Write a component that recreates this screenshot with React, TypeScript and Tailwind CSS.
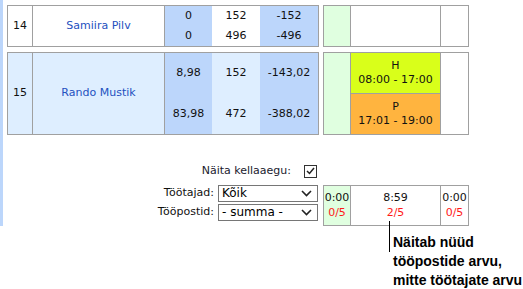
import React from 'react';

const BLUE = 'bg-[#bcd6fb]';
const LIGHT = 'bg-[#deeeff]';
const GREEN = 'bg-[#e0ffe0]';

function Chevron() {
  return (
    <svg width="11" height="7" viewBox="0 0 11 7" className="mr-[5px]">
      <path d="M1 1 L5.5 5.5 L10 1" fill="none" stroke="#222" strokeWidth="1.6" />
    </svg>
  );
}

function Select({ value }: { value: string }) {
  return (
    <div className="flex h-[17px] w-[100px] items-center justify-between border border-[#767676] bg-white pl-[3px] text-[12px] leading-none text-black">
      <span>{value}</span>
      <Chevron />
    </div>
  );
}

function StatCell({ time, count, className }: { time: string; count: string; className: string }) {
  return (
    <div className={`flex flex-col items-center justify-center leading-[15px] ${className}`}>
      <span className="text-[#111]">{time}</span>
      <span className="text-[#ff1a1a]">{count}</span>
    </div>
  );
}

export default function App() {
  return (
    <div className="flex h-[289px] w-[523px] overflow-hidden bg-white text-[11px] text-[#111] [font-family:'DejaVu_Sans',Verdana,sans-serif]">
      {/* left blue strip */}
      <div className="h-[226px] w-[3px] shrink-0 bg-[#bcd6fb]"></div>

      <div className="ml-[4px] flex flex-col pt-[5px]">
        {/* row 14 */}
        <div className="flex gap-[4px]">
          <div className="flex h-[42px] w-[312px] border border-[#a0a0a0]">
            <div className="flex w-[25px] items-center justify-center border-r border-[#a0a0a0]">14</div>
            <div className="flex w-[132px] items-center justify-center border-r border-[#a0a0a0] text-[#2450c0]">Samiira Pilv</div>
            <div className={`flex w-[47px] flex-col items-center justify-center leading-[20px] ${BLUE}`}>
              <span>0</span>
              <span>0</span>
            </div>
            <div className="flex w-[48px] flex-col items-center justify-center leading-[20px]">
              <span>152</span>
              <span>496</span>
            </div>
            <div className={`flex w-[58px] flex-col items-center justify-center leading-[20px] ${BLUE}`}>
              <span>-152</span>
              <span>-496</span>
            </div>
          </div>
          <div className="flex h-[42px] w-[146px] border border-[#a0a0a0]">
            <div className={`w-[27px] border-r border-[#a0a0a0] ${GREEN}`}></div>
            <div className="w-[90px] border-r border-[#a0a0a0]"></div>
            <div className="w-[27px]"></div>
          </div>
        </div>

        {/* row 15 */}
        <div className="mt-[5px] flex gap-[4px]">
          <div className={`flex h-[83px] w-[312px] border border-[#a0a0a0] ${LIGHT}`}>
            <div className="flex w-[25px] items-center justify-center border-r border-[#a0a0a0]">15</div>
            <div className="flex w-[132px] items-center justify-center border-r border-[#a0a0a0] text-[#2450c0]">Rando Mustik</div>
            <div className={`flex w-[47px] flex-col ${BLUE}`}>
              <span className="flex flex-1 items-center justify-center">8,98</span>
              <span className="flex flex-1 items-center justify-center">83,98</span>
            </div>
            <div className="flex w-[48px] flex-col">
              <span className="flex flex-1 items-center justify-center">152</span>
              <span className="flex flex-1 items-center justify-center">472</span>
            </div>
            <div className={`flex w-[58px] flex-col ${BLUE}`}>
              <span className="flex flex-1 items-center justify-center">-143,02</span>
              <span className="flex flex-1 items-center justify-center">-388,02</span>
            </div>
          </div>
          <div className="flex h-[83px] w-[146px] border border-[#a0a0a0]">
            <div className={`w-[27px] border-r border-[#a0a0a0] ${GREEN}`}></div>
            <div className="flex w-[90px] flex-col border-r border-[#a0a0a0]">
              <div className="flex h-[40px] flex-col items-center justify-center bg-[#d9ff1a] leading-[14px]">
                <span>H</span>
                <span>08:00 - 17:00</span>
              </div>
              <div className="flex flex-1 flex-col items-center justify-center border-t border-[#a0a0a0] bg-[#ffb43f] leading-[14px]">
                <span>P</span>
                <span>17:01 - 19:00</span>
              </div>
            </div>
            <div className="w-[27px]"></div>
          </div>
        </div>

        {/* filters */}
        <div className="mt-[28px] flex w-[310px] items-center justify-end gap-[13px] text-[#1a1a2e]">
          <span>Näita kellaaegu:</span>
          <div className="flex h-[13px] w-[13px] items-center justify-center border border-[#333] bg-white">
            <svg width="9" height="8" viewBox="0 0 9 8">
              <path d="M1 4 L3.5 6.5 L8 1" fill="none" stroke="#222" strokeWidth="1.5" />
            </svg>
          </div>
        </div>

        <div className="mt-[5px] flex items-start gap-[5px]">
          <div className="flex w-[311px] flex-col items-end gap-[2px]">
            <div className="flex items-center gap-[4px]">
              <span>Töötajad:</span>
              <Select value="Kõik" />
            </div>
            <div className="flex items-center gap-[4px]">
              <span>Tööpostid:</span>
              <Select value="- summa -" />
            </div>
          </div>

          <div className="relative flex flex-col">
            <div className="flex h-[41px] w-[146px] border border-[#a0a0a0]">
              <StatCell time="0:00" count="0/5" className={`w-[27px] border-r border-[#a0a0a0] ${GREEN}`} />
              <StatCell time="8:59" count="2/5" className="w-[90px] border-r border-[#a0a0a0]" />
              <StatCell time="0:00" count="0/5" className="w-[27px]" />
            </div>
            <div className="absolute left-[66px] top-[36px] h-[31px] w-px bg-black"></div>
            <div className="ml-[70px] mt-[7px] w-[150px] text-[14px] font-bold leading-[19px] text-black [font-family:'Liberation_Sans',Arial,sans-serif]">
              Näitab nüüd
              <br />
              tööpostide arvu,
              <br />
              mitte töötajate arvu
            </div>
          </div>
        </div>
      </div>
    </div>
  );
}
